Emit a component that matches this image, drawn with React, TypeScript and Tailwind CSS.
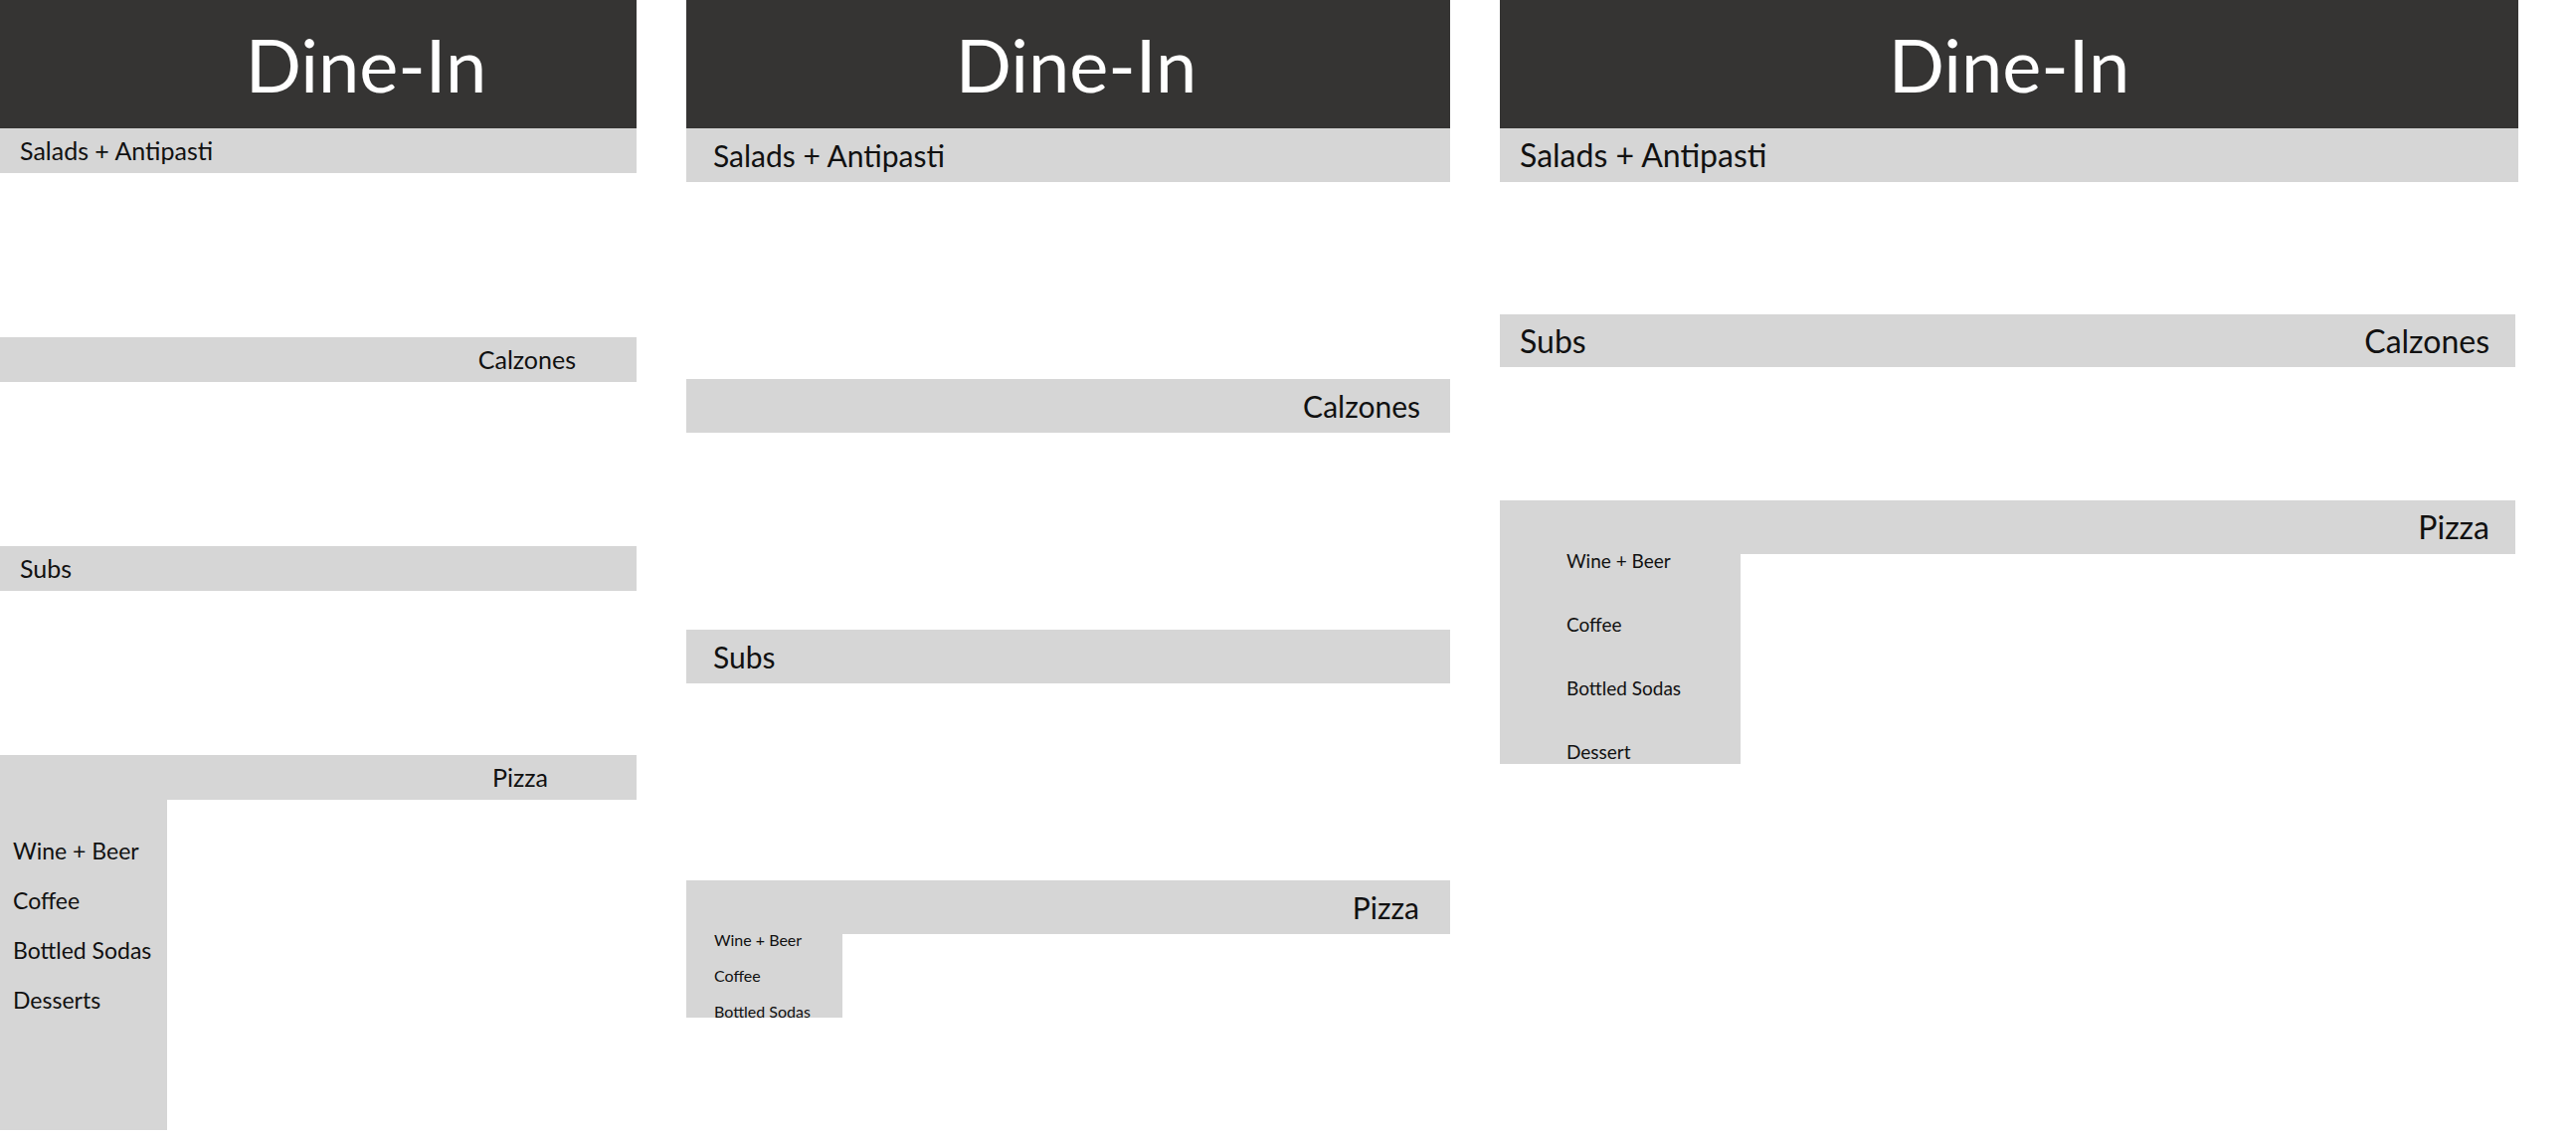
import React from "react";

const font = { fontFamily: "Lato, 'Liberation Sans', sans-serif" };

function Header({ className }: { className: string }) {
  return (
    <div className={`h-[129px] bg-[#353433] flex items-center justify-center ${className}`}>
      <h1 className="text-white text-[74px] leading-none font-normal">Dine-In</h1>
    </div>
  );
}

// 640px wide mockup
function SmallMenu() {
  const drinks = ["Wine + Beer", "Coffee", "Bottled Sodas", "Desserts"];
  return (
    <div className="w-[640px] shrink-0 flex flex-col text-[#111]">
      <Header className="pl-[96px]" />
      <div className="h-[45px] bg-[#d6d6d6] flex items-center pl-[20px] text-[25px]">Salads + Antipasti</div>
      <div className="mt-[165px] h-[45px] bg-[#d6d6d6] flex items-center justify-end pr-[61px] text-[25px]">Calzones</div>
      <div className="mt-[165px] h-[45px] bg-[#d6d6d6] flex items-center pl-[20px] text-[25px]">Subs</div>
      <div className="mt-[165px] h-[45px] bg-[#d6d6d6] flex items-center justify-end pr-[89px] text-[25px]">Pizza</div>
      <div className="w-[168px] h-[332px] bg-[#d6d6d6] pt-[26px] pl-[13px] text-[23px] leading-[50px]">
        {drinks.map((d) => (
          <div key={d}>{d}</div>
        ))}
      </div>
    </div>
  );
}

// 768px wide mockup
function MediumMenu() {
  const drinks = ["Wine + Beer", "Coffee", "Bottled Sodas"];
  return (
    <div className="w-[768px] shrink-0 flex flex-col text-[#111]">
      <Header className="pl-[16px]" />
      <div className="h-[54px] bg-[#d6d6d6] flex items-center pl-[27px] text-[30px]">Salads + Antipasti</div>
      <div className="mt-[198px] h-[54px] bg-[#d6d6d6] flex items-center justify-end pr-[30px] text-[30px]">Calzones</div>
      <div className="mt-[198px] h-[54px] bg-[#d6d6d6] flex items-center pl-[27px] text-[30px]">Subs</div>
      <div className="mt-[198px] h-[54px] bg-[#d6d6d6] flex items-center justify-end pr-[31px] text-[30px]">Pizza</div>
      <div className="w-[157px] h-[84px] bg-[#d6d6d6] overflow-hidden pl-[28px] text-[16px]">
        <div className="flex flex-col gap-[25px] leading-[11px]">
          {drinks.map((d) => (
            <div key={d}>{d}</div>
          ))}
        </div>
      </div>
    </div>
  );
}

// 1024px wide mockup
function LargeMenu() {
  const drinks = ["Wine + Beer", "Coffee", "Bottled Sodas", "Dessert"];
  return (
    <div className="w-[1024px] shrink-0 flex flex-col text-[#111]">
      <Header className="" />
      <div className="h-[54px] bg-[#d6d6d6] flex items-center pl-[20px] text-[32px]">Salads + Antipasti</div>
      <div className="mt-[133px] mr-[3px] h-[53px] bg-[#d6d6d6] flex items-center justify-between pl-[20px] pr-[26px] text-[32px]">
        <span>Subs</span>
        <span>Calzones</span>
      </div>
      <div className="mt-[134px] mr-[3px] h-[54px] bg-[#d6d6d6] flex items-center justify-end pr-[26px] text-[32px]">Pizza</div>
      <div className="w-[242px] h-[211px] bg-[#d6d6d6] pl-[67px] text-[19px]">
        <div className="flex flex-col gap-[50px] leading-[14px]">
          {drinks.map((d) => (
            <div key={d}>{d}</div>
          ))}
        </div>
      </div>
    </div>
  );
}

export default function App() {
  return (
    <div className="min-h-screen bg-white flex items-start gap-[50px]" style={font}>
      <SmallMenu />
      <MediumMenu />
      <LargeMenu />
    </div>
  );
}
